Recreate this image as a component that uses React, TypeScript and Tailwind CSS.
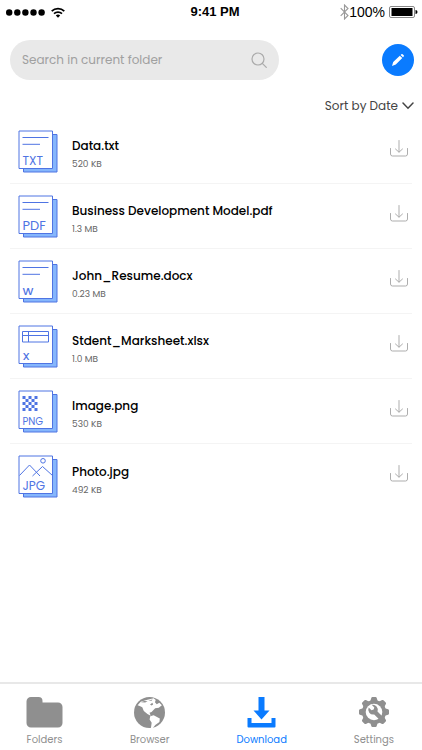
import type { ReactNode } from 'react'

type Kind = 'txt' | 'pdf' | 'docx' | 'xlsx' | 'png' | 'jpg'

interface FileItem {
  name: string
  size: string
  kind: Kind
}

const files: FileItem[] = [
  { name: 'Data.txt', size: '520 KB', kind: 'txt' },
  { name: 'Business Development Model.pdf', size: '1.3 MB', kind: 'pdf' },
  { name: 'John_Resume.docx', size: '0.23 MB', kind: 'docx' },
  { name: 'Stdent_Marksheet.xlsx', size: '1.0 MB', kind: 'xlsx' },
  { name: 'Image.png', size: '530 KB', kind: 'png' },
  { name: 'Photo.jpg', size: '492 KB', kind: 'jpg' }
]

const labels: Record<Kind, { text: string; size: number; weight: number }> = {
  txt: { text: 'TXT', size: 12, weight: 400 },
  pdf: { text: 'PDF', size: 13, weight: 400 },
  docx: { text: 'W', size: 11, weight: 500 },
  xlsx: { text: 'X', size: 11, weight: 500 },
  png: { text: 'PNG', size: 10, weight: 400 },
  jpg: { text: 'JPG', size: 12, weight: 400 }
}

const checker = Array.from({ length: 25 }, (_, i) => i).filter((i) => i % 2 === 0)

function FileIcon({ kind }: { kind: Kind }) {
  const label = labels[kind]
  return (
    <svg width="40" height="43" viewBox="0 0 40 43" fill="none" stroke="#4f74e3" className="shrink-0" aria-hidden="true">
      <path d="M5.5 4.5h33.5v37.5H5.5z" fill="#85b6fc" />
      <path d="M1 1h33.5v37.5H1z" fill="#fff" />
      {(kind === 'txt' || kind === 'pdf' || kind === 'docx') && <path d="M4.5 7.5h26M4.5 14.3H22" />}
      {kind === 'xlsx' && <path d="M4.5 6.5h26V17h-26zM4.5 10.5h26M10.5 6.5V17" />}
      {kind === 'png' && (
        <g fill="#4f74e3" stroke="none">
          {checker.map((i) => (
            <rect key={i} x={4.5 + (i % 5) * 3} y={6 + Math.floor(i / 5) * 3} width="3" height="3" />
          ))}
        </g>
      )}
      {kind === 'jpg' && (
        <>
          <circle cx="25" cy="5.8" r="2.3" />
          <path d="M1.5 20.5 11.5 10 22 21M14.5 21l10-9.5 10 9" />
        </>
      )}
      <text x="4.5" y="35" fontSize={label.size} fontWeight={label.weight} fill="#4f74e3" stroke="none">
        {label.text}
      </text>
    </svg>
  )
}

function TrayIcon() {
  return (
    <svg width="18" height="17" viewBox="0 0 18 17" fill="none" stroke="#adadad" strokeLinecap="round" strokeLinejoin="round" aria-hidden="true">
      <path d="M9 .5V12M5.5 9 9 12.2 12.5 9M.5 8.500V14a2 2 0 0 0 2 2h13a2 2 0 0 0 2-2V8.500" />
    </svg>
  )
}

function StatusBar() {
  return (
    <div className="grid h-6 grid-cols-3 items-center px-1 font-['Liberation_Sans',sans-serif] text-sm text-black">
      <div className="flex items-center gap-1.5 pl-0.5">
        <svg width="39" height="7" viewBox="0 0 39 7" aria-hidden="true">
          {[0, 1, 2, 3, 4].map((i) => (
            <circle key={i} cx={3.2 + i * 8.1} cy="3.5" r="3.2" />
          ))}
        </svg>
        <svg width="14" height="11" viewBox="0 0 14 11" fill="none" stroke="#000" strokeWidth="1.7" aria-hidden="true">
          <path d="M.7 4.2a9 9 0 0 1 12.6 0M3 6.700a5.800 5.800 0 0 1 8 0" />
          <path d="M7 10.8 4.800 8.500a3.200 3.200 0 0 1 4.400 0z" fill="#000" stroke="none" />
        </svg>
      </div>
      <div className="pl-2 text-center text-[13px] font-bold">9:41 PM</div>
      <div className="flex items-center justify-end">
        <svg width="9" height="16" viewBox="0 0 9 16" fill="none" stroke="#999" strokeWidth="1.1" aria-hidden="true">
          <path d="M.7 4.200 8 11.500 4.500 15V1L8 4.500.7 11.800" />
        </svg>
        <span>100%</span>
        <svg width="29" height="12" viewBox="0 0 29 12" className="ml-1" aria-hidden="true">
          <rect x=".5" y=".5" width="25" height="11" rx="1.5" fill="none" stroke="#888" />
          <rect x="2.5" y="2" width="21" height="8" />
          <path d="M26.500 4a2 2 0 0 1 0 4z" />
        </svg>
      </div>
    </div>
  )
}

function FolderIcon() {
  return (
    <svg width="37" height="31" viewBox="0 0 37 31" fill="currentColor" aria-hidden="true">
      <path d="M5 0h7.500a4 4 0 0 1 4 4v1.500H32a4.500 4.500 0 0 1 4.500 4.500v16a4.500 4.500 0 0 1-4.500 4.500H5A4.500 4.500 0 0 1 .5 26V4.500A4.500 4.500 0 0 1 5 0z" />
    </svg>
  )
}

function GlobeIcon() {
  return (
    <svg width="31" height="31" viewBox="0 0 30 30" fill="currentColor" aria-hidden="true">
      <circle cx="15" cy="15" r="15" />
      <path
        fill="#fff"
        d="M3.500 8 6.500 4.500 12 2.800 19 1.300 21 3 20.300 5.200 22 7 24.500 5.500 27 8 24 10.300 20.500 11 17 14.500 15 15.200 16.200 18.200 13 16.500 9.500 13.500 8 10 5.500 8.600z"
      />
      <path fill="#fff" d="m15.700 18.700 3.300-1 6 3.200-.4 3.200-4 3-2.600 3.200-1.700.2.800-5.500-2-3.300z" />
      <path d="m6.800 5.200 3-1.400 3.400.2-2.400 1.300zM13.800 3.300l4.200-1-1 1.300zM15.500 7.200l2.300-1.700.7 1.700-1.500 1z" />
    </svg>
  )
}

function DownloadIcon() {
  return (
    <svg width="29" height="31" viewBox="0 0 29 31" fill="currentColor" aria-hidden="true">
      <path d="M11.500 0h6v13.500h5L14.500 22.500 6.500 13.500h5z" />
      <path d="M.5 21h4v5h20v-5h4v8.500a1 1 0 0 1-1 1h-26a1 1 0 0 1-1-1z" />
    </svg>
  )
}

function GearIcon() {
  return (
    <svg width="30" height="30" viewBox="0 0 30 30" fill="currentColor" aria-hidden="true">
      {[0, 45, 90, 135, 180, 225, 270, 315].map((a) => (
        <path key={a} d="M11 5 12.300.900Q12.500 0 13.400 0h3.200q.9 0 1.100.900L19 5z" transform={`rotate(${a} 15 15)`} />
      ))}
      <circle cx="15" cy="15" r="12" />
      <circle cx="15" cy="15" r="8.300" fill="#fff" />
      <path d="M9.700 10.500 12.500 13.200l2.200-.6.600-2.200-2.600-2.600a5 5 0 0 1 5.800 6.600l5.500 5.500-3.200 3.200-5.600-5.600a5 5 0 0 1-5.500-7z" />
    </svg>
  )
}

function Tab({ label, active, children }: { label: string; active?: boolean; children: ReactNode }) {
  return (
    <button
      className={`flex flex-col items-center gap-1 text-[10px] leading-4 ${active ? 'text-[#0a7bff]' : 'text-[#8f8f8f]'}`}
      aria-current={active ? 'page' : undefined}
    >
      <span className="flex h-8 items-center">{children}</span>
      {label}
    </button>
  )
}

export default function App() {
  return (
    <div className="flex min-h-screen flex-col bg-white font-[Poppins,Inter,sans-serif]">
      <StatusBar />

      <header className="flex items-center justify-between pt-4 pr-2 pl-2.5">
        <label className="flex h-10 w-2/3 items-center rounded-full bg-[#e9e9e9] px-3">
          <input
            type="search"
            aria-label="Search in current folder"
            placeholder="Search in current folder"
            className="min-w-0 flex-1 bg-transparent text-xs text-black outline-none placeholder:text-[#a0a0a0]"
          />
          <svg width="16" height="16" viewBox="0 0 16 16" fill="none" stroke="#aaa" strokeWidth="1.2" strokeLinecap="round" aria-hidden="true">
            <circle cx="7" cy="7" r="6" />
            <path d="m11.300 11.300 4 4" />
          </svg>
        </label>
        <button aria-label="Edit" className="flex size-8 items-center justify-center rounded-full bg-[#0a7bff] text-white">
          <svg width="14" height="14" viewBox="0 0 14 14" fill="currentColor" aria-hidden="true">
            <path d="M8.800 2.700 11.300 5 4.800 11.400 1 13l1.200-3.900zM9.600 1.900l.8-.7q.6-.5 1.200 0l1.100 1q.6.600 0 1.200l-.7.800z" />
          </svg>
        </button>
      </header>

      <div className="flex justify-end pt-4 pr-2">
        <button className="flex items-center gap-1 text-xs leading-5 text-[#444]">
          Sort by Date
          <svg width="12" height="8" viewBox="0 0 12 8" fill="none" stroke="currentColor" strokeWidth="1.5" strokeLinecap="round" aria-hidden="true">
            <path d="m1 1 5 5.200L11 1" />
          </svg>
        </button>
      </div>

      <ul className="flex-1 px-2.5 pt-[3px]">
        {files.map((file) => (
          <li key={file.name} className="flex h-[65px] items-center border-b border-[#f4f4f4] pr-1 pl-2 last:border-b-0">
            <FileIcon kind={file.kind} />
            <div className="ml-3.5 flex-1 pt-1.5">
              <p className="text-xs leading-5 font-medium text-black">{file.name}</p>
              <p className="text-[9px] leading-4 text-[#666]">{file.size}</p>
            </div>
            <button aria-label={`Download ${file.name}`} className="pb-1.5">
              <TrayIcon />
            </button>
          </li>
        ))}
      </ul>

      <nav className="flex justify-between border-t-2 border-[#e8e8e8] pt-3 pr-7 pb-0.5 pl-6.5">
        <Tab label="Folders">
          <FolderIcon />
        </Tab>
        <Tab label="Browser">
          <GlobeIcon />
        </Tab>
        <Tab label="Download" active>
          <DownloadIcon />
        </Tab>
        <Tab label="Settings">
          <GearIcon />
        </Tab>
      </nav>
    </div>
  )
}
